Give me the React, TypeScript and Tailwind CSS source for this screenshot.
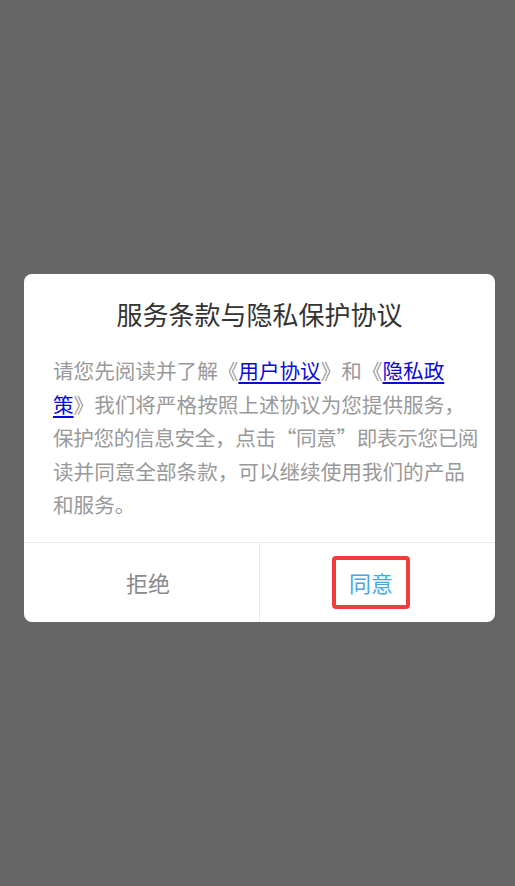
const font = { fontFamily: '"Noto Sans CJK SC", "Noto Sans", sans-serif' }

const linkCls = "text-[#0b0bd6] underline underline-offset-[3px]"

const lines: { text: React.ReactNode; cls?: string }[] = [
  {
    text: (
      <>
        请您先阅读并了解《<a href="#" className={linkCls}>用户协议</a>》和《
        <a href="#" className={linkCls}>隐私政</a>
      </>
    ),
  },
  {
    text: (
      <>
        <a href="#" className={linkCls}>策</a>》我们将严格按照上述协议为您提供服务，
      </>
    ),
  },
  { text: "保护您的信息安全，点击“同意”即表示您已阅", cls: "tracking-[-0.35px]" },
  { text: "读并同意全部条款，可以继续使用我们的产品" },
  { text: "和服务。" },
]

export default function App() {
  return (
    <div className="h-[886px] w-full bg-[#666666] pl-[24px] pt-[274px]" style={font}>
      <div className="w-[471px] overflow-hidden rounded-[8px] bg-white">
        <h1 className="pt-[22px] text-center text-[26px] leading-[36px] font-normal text-[#333333]">
          服务条款与隐私保护协议
        </h1>
        <div className="mt-[22px] px-[29px] pb-[20px] text-[20.6px] leading-[33.6px] text-[#999999]">
          {lines.map((line, i) => (
            <div key={i} className={`whitespace-nowrap ${line.cls ?? ""}`}>
              {line.text}
            </div>
          ))}
        </div>
        <div className="flex h-[80px] border-t border-[#ebebeb]">
          <button type="button" className="flex flex-1 items-center justify-center pl-[13px] text-[22px] text-[#8a8a8a]">
            拒绝
          </button>
          <div className="w-px bg-[#ebebeb]" />
          <button type="button" className="flex flex-1 items-center justify-center pr-[13px]">
            <span className="flex h-[53px] w-[78px] items-center justify-center rounded-[4px] border-4 border-[#f23b3b] text-[22px] text-[#4aa6e6]">
              同意
            </span>
          </button>
        </div>
      </div>
    </div>
  )
}
